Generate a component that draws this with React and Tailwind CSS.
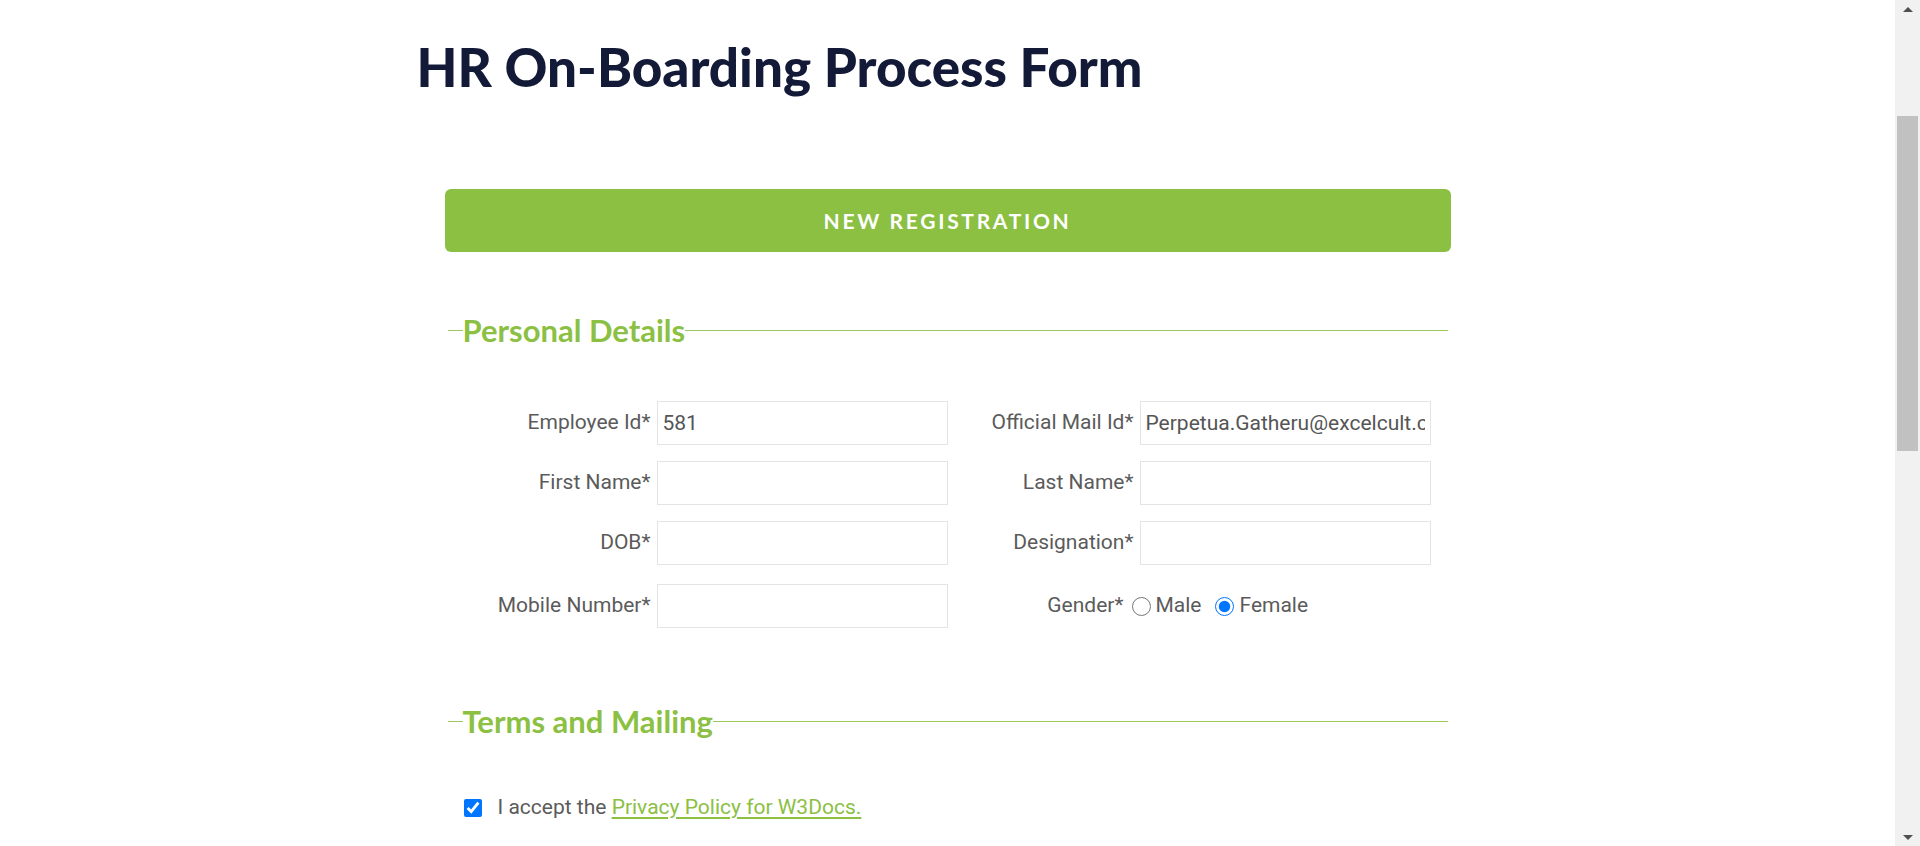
import React from "react";

const lato = { fontFamily: "Lato, 'Open Sans', sans-serif" };

function Field({ label, labelW, value }) {
  return (
    <div className="flex items-center gap-[6px]">
      <label className={`${labelW} text-right shrink-0`}>{label}</label>
      <input
        type="text"
        defaultValue={value}
        className="w-[291px] h-[44px] border border-[#e4e4e4] bg-white px-[5px] text-[21px] text-[#555] outline-none"
        style={{ fontFamily: "Roboto, 'Liberation Sans', sans-serif" }}
      />
    </div>
  );
}

function Legend({ children }) {
  return (
    <div className="flex items-center">
      <div className="w-[15px] h-px bg-[#9cc95f]" />
      <span className="text-[31px] leading-[36px] font-bold text-[#8bc043]" style={lato}>
        {children}
      </span>
      <div className="flex-1 h-px bg-[#9cc95f]" />
    </div>
  );
}

export default function App() {
  return (
    <div className="flex h-[846px] w-[1920px] overflow-hidden bg-white">
      <main className="flex-1 min-w-0">
        <div className="w-[1062px] mx-auto">
          <h1
            className="mt-[35px] text-[53px] leading-[64px] font-black text-[#131a38]"
            style={lato}
          >
            HR On-Boarding Process Form
          </h1>
          <div className="px-[28px] mt-[90px]">
            <div
              className="h-[63px] rounded-[6px] bg-[#8bc043] flex items-center justify-center text-white text-[21px] font-bold tracking-[2.7px]"
              style={lato}
            >
              NEW REGISTRATION
            </div>
            <div
              className="px-[3px] mt-[60px] text-[21px] text-[#5b5b5b]"
              style={{ fontFamily: "Roboto, 'Liberation Sans', sans-serif" }}
            >
              <Legend>Personal Details</Legend>
              <div className="mt-[53px] flex flex-col">
                <div className="flex">
                  <Field label="Employee Id*" labelW="w-[203px]" value="581" />
                  <Field label="Official Mail Id*" labelW="w-[186px]" value="Perpetua.Gatheru@excelcult.com" />
                </div>
                <div className="flex mt-[16px]">
                  <Field label="First Name*" labelW="w-[203px]" value="" />
                  <Field label="Last Name*" labelW="w-[186px]" value="" />
                </div>
                <div className="flex mt-[16px]">
                  <Field label="DOB*" labelW="w-[203px]" value="" />
                  <Field label="Designation*" labelW="w-[186px]" value="" />
                </div>
                <div className="flex mt-[19px]">
                  <Field label="Mobile Number*" labelW="w-[203px]" value="" />
                  <div className="flex items-center">
                    <span className="w-[176px] text-right">Gender*</span>
                    <input
                      type="radio"
                      name="gender"
                      className="ml-[8px] w-[19px] h-[19px] accent-[#0075ff]"
                    />
                    <span className="ml-[5px]">Male</span>
                    <input
                      type="radio"
                      name="gender"
                      defaultChecked
                      className="ml-[13px] w-[19px] h-[19px] accent-[#0075ff]"
                    />
                    <span className="ml-[6px]">Female</span>
                  </div>
                </div>
              </div>
              <div className="mt-[75px]">
                <Legend>Terms and Mailing</Legend>
              </div>
              <div className="mt-[53px] flex items-center pl-[16px]">
                <input
                  type="checkbox"
                  defaultChecked
                  className="w-[18px] h-[18px] accent-[#0075ff]"
                />
                <span className="ml-[16px]">
                  I accept the{" "}
                  <a href="#" className="text-[#8bc043] underline underline-offset-[3px]">
                    Privacy Policy for W3Docs.
                  </a>
                </span>
              </div>
            </div>
          </div>
        </div>
      </main>
      <div className="w-[25px] h-full bg-[#f1f1f1] flex flex-col items-center">
        <div className="h-[17px] w-full flex items-center justify-center">
          <svg width="10" height="6" viewBox="0 0 10 6">
            <path d="M0 6 L5 1 L10 6 Z" fill="#505050" />
          </svg>
        </div>
        <div className="mt-[99px] w-[21px] h-[335px] bg-[#c1c1c1]" />
        <div className="flex-1" />
        <div className="h-[17px] w-full flex items-center justify-center">
          <svg width="10" height="6" viewBox="0 0 10 6">
            <path d="M0 0 L5 5 L10 0 Z" fill="#505050" />
          </svg>
        </div>
      </div>
    </div>
  );
}
